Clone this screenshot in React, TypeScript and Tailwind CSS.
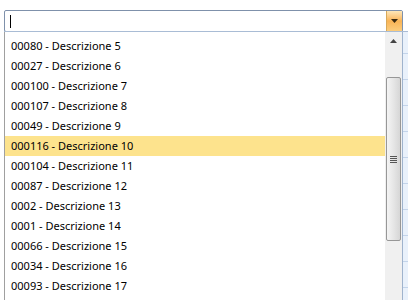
const items = [
  "00080 - Descrizione 5",
  "00027 - Descrizione 6",
  "000100 - Descrizione 7",
  "000107 - Descrizione 8",
  "00049 - Descrizione 9",
  "000116 - Descrizione 10",
  "000104 - Descrizione 11",
  "00087 - Descrizione 12",
  "0002 - Descrizione 13",
  "0001 - Descrizione 14",
  "00066 - Descrizione 15",
  "00034 - Descrizione 16",
  "00093 - Descrizione 17",
];

const gridRows = Array.from({ length: 11 });

const App = () => {
  return (
    <div className="relative w-[408px] h-[300px] bg-white overflow-hidden font-['Noto_Sans',sans-serif] text-[11px] text-black">
      {/* combo input */}
      <div className="pt-[10px] pl-[4px] pr-[5px]">
        <div className="flex h-[22px] border border-[#7f91ab] rounded-[2px] bg-white">
          <div className="flex-1 flex items-center pl-[5px]">
            <div className="w-px h-[13px] bg-black" />
          </div>
          <div className="w-[16px] flex items-center justify-center border-l border-[#d8a95a] bg-gradient-to-b from-[#fde7b8] via-[#f9b455] to-[#fccd7c]">
            <svg width="7" height="4" viewBox="0 0 7 4">
              <path d="M0 0h7L3.5 4z" fill="#3a2a10" />
            </svg>
          </div>
        </div>
      </div>

      {/* grid underneath */}
      <div className="ml-[4px] mt-[-1px] h-[280px] border-l border-t border-[#a9bcd5] bg-[#e9f1fb]">
        <div className="h-[21px]" />
        {gridRows.map((_, i) => (
          <div key={i} className="h-[26px] border-t border-[#c3d4ea]" />
        ))}
      </div>

      {/* dropdown list */}
      <div className="absolute left-[4px] top-[32px] w-[399px] h-[268px] flex bg-white border-l border-[#a0a0a0] border-r border-r-[#9fb3cd]">
        <div className="flex-1 pt-[4px]">
          {items.map((it, i) => (
            <div
              key={it}
              className={`h-[20px] flex items-center pl-[6px] ${i === 5 ? "bg-[#fde38d]" : ""}`}
            >
              {it}
            </div>
          ))}
        </div>
        <div className="w-[17px] flex flex-col bg-[#f0f0f0]">
          <div className="h-[18px] flex items-center justify-center">
            <svg width="7" height="4" viewBox="0 0 7 4">
              <path d="M3.5 0L7 4H0z" fill="#444" />
            </svg>
          </div>
          <div className="h-[27px]" />
          <div className="h-[164px] mx-[1px] rounded-[2px] border border-[#979797] bg-gradient-to-r from-[#f4f4f4] via-[#e6e6e6] to-[#d6d6d6] flex items-center justify-center">
            <div className="flex flex-col gap-[1px]">
              <div className="w-[7px] h-px bg-[#555]" />
              <div className="w-[7px] h-px bg-[#555]" />
              <div className="w-[7px] h-px bg-[#555]" />
              <div className="w-[7px] h-px bg-[#555]" />
            </div>
          </div>
        </div>
      </div>
    </div>
  );
};

export default App;
